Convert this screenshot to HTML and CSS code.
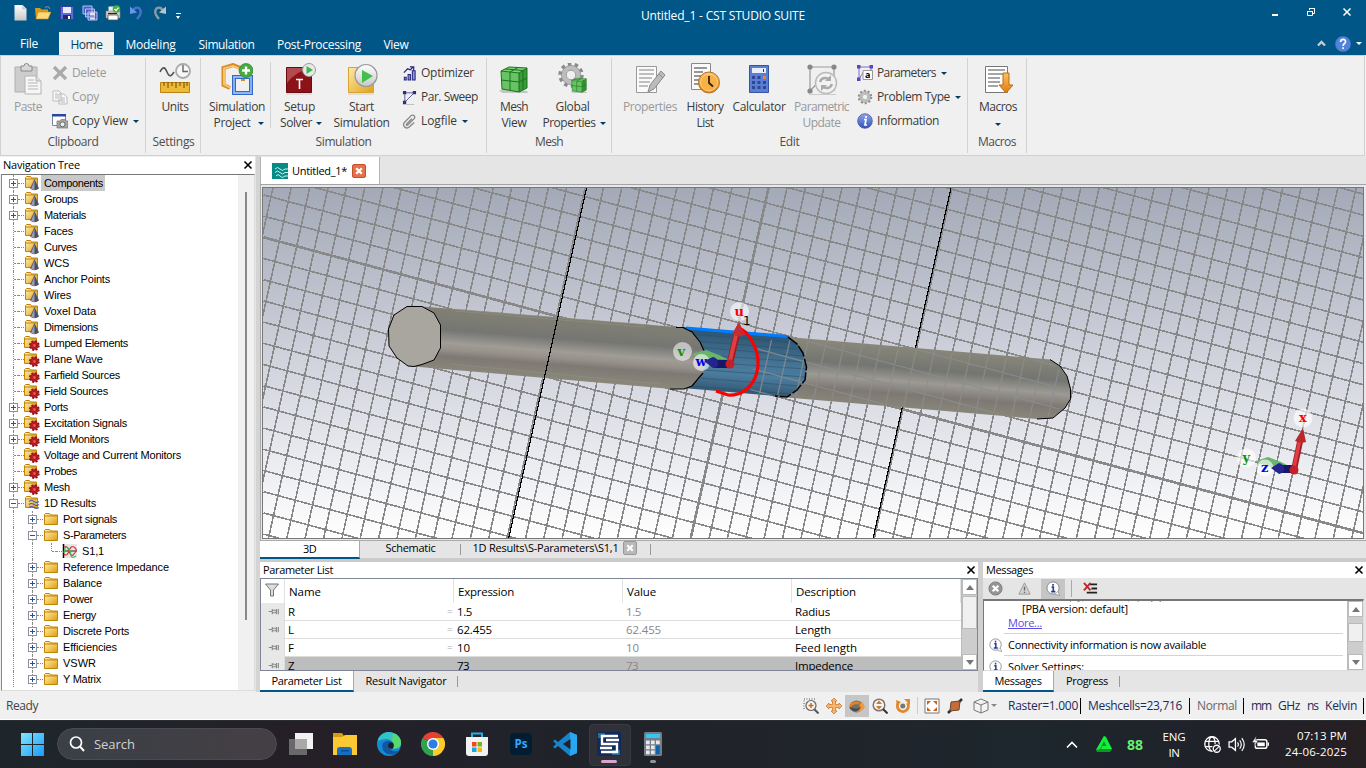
FILE: index.html
```html
<!DOCTYPE html>
<html lang="en">
<head>
<meta charset="utf-8">
<title>Untitled_1 - CST STUDIO SUITE</title>
<link rel="stylesheet" href="styles.css">
</head>
<body>
<svg class="defs" width="0" height="0">
  <defs>
    <linearGradient id="gold" x1="0" y1="0" x2="1" y2="1"><stop offset="0" stop-color="#fce9a8"/><stop offset="1" stop-color="#e0a21a"/></linearGradient>
    <linearGradient id="fold" x1="0" y1="0" x2="1" y2="1"><stop offset="0" stop-color="#fff0bd"/><stop offset=".5" stop-color="#f1cb65"/><stop offset="1" stop-color="#d99b10"/></linearGradient>
    <linearGradient id="orange" x1="0" y1="0" x2="0" y2="1"><stop offset="0" stop-color="#fbc25e"/><stop offset="1" stop-color="#e07c10"/></linearGradient>
    <linearGradient id="silver" x1="0" y1="0" x2="0" y2="1"><stop offset="0" stop-color="#ffffff"/><stop offset="1" stop-color="#c8c8c8"/></linearGradient>
    <linearGradient id="bluei" x1="0" y1="0" x2="0" y2="1"><stop offset="0" stop-color="#8fa8ea"/><stop offset="1" stop-color="#3353b8"/></linearGradient>
    <linearGradient id="win" x1="0" y1="0" x2="1" y2="1"><stop offset="0" stop-color="#7fe6ff"/><stop offset="1" stop-color="#1a9bfc"/></linearGradient>
    <symbol id="page" viewBox="0 0 16 16"><path d="M2.500 0h8l4 4v11.500h-12z" fill="url(#silver)"/><path d="M10.500 0v4h4" fill="#d8d8d8" stroke="#bbb" stroke-width=".6"/></symbol>
    <symbol id="open" viewBox="0 0 16 16"><path d="M0 3h5l1.500 1.500H13V14H1z" fill="#d99a1c"/><path d="M3 7h13l-3 7H1z" fill="#fbd878" stroke="#c98a10" stroke-width=".6"/><path d="M10 3q3-3 5 1" fill="none" stroke="#5c8197" stroke-width="1.300"/></symbol>
    <symbol id="save" viewBox="0 0 16 16"><path d="M1.500 1.500h13v13h-13z" fill="#5d6bd8" stroke="#3740a0"/><path d="M4 2h8v6H4z" fill="#e8eafa"/><path d="M4 10h8v4H4z" fill="#22286e"/><path d="M9 11h2v3H9z" fill="#fff"/></symbol>
    <symbol id="saveall" viewBox="0 0 16 16"><g stroke="#c8d0f5" stroke-width=".9" fill="#4b5dc6"><path d="M1 1h9v8H1zM3.500 4h9v8h-9zM6 7h9v8H6z"/></g><path d="M8 7.500h5v3H8zM8 12.500h5v2H8z" fill="#dfe3fb"/></symbol>
    <symbol id="print" viewBox="0 0 16 16"><path d="M3.500 1.500h8v5h-8z" fill="#eee"/><path d="M1 6h14v7H1z" fill="#d4cfc2" stroke="#888" stroke-width=".6"/><path d="M3 10h10v5H3z" fill="#fff" stroke="#555" stroke-width=".8"/><path d="M3 8.500h9" stroke="#222" stroke-width="1.200"/><circle cx="11.500" cy="4" r="3.800" fill="#46ae43"/><path d="M9.500 4l1.500 1.600L13.500 2.600" fill="none" stroke="#fff" stroke-width="1.300"/></symbol>
    <symbol id="undo" viewBox="0 0 16 16"><path d="M5 5.500Q8 1 11.500 3.500 15 7.500 9 14" fill="none" stroke="#4a70cc" stroke-width="2.400"/><path d="M2 1.500v7.500l7-1.500z" fill="#6c93e6"/></symbol>
    <symbol id="redo" viewBox="0 0 16 16"><path d="M11 5.500Q8 1 4.500 3.500 1 7.500 7 14" fill="none" stroke="#8b9aa3" stroke-width="2.400"/><path d="M14 1.500v7.500l-7-1.500z" fill="#b8c2c8"/></symbol>

    <symbol id="paste" viewBox="0 0 32 32"><path d="M3 4h22v25H3z" fill="#cdcdcd" stroke="#b0b0b0"/><path d="M9 3h3a2.500 2.500 0 0 1 5 0h3v5H9z" fill="#d8d8d8" stroke="#888"/><path d="M13 13h11l5 5v13H13z" fill="#f6f6f6" stroke="#b4b4b4"/><path d="M24 13v5h5" fill="#ddd" stroke="#b4b4b4"/><path d="M16 17h6M16 20h10M16 23h10M16 26h10" stroke="#b5b5b5" stroke-width="1.200"/></symbol>
    <symbol id="delete" viewBox="0 0 16 16"><path d="M2 2l12 12M14 2L2 14" stroke="#aaa" stroke-width="3.200"/></symbol>
    <symbol id="copy" viewBox="0 0 16 16"><path d="M1 2h6l2 2v8H1zM7 5h5l3 3v7H7z" fill="#f8f8f8" stroke="#bbb"/><path d="M3 5h3M3 7h3M3 9h3M9 9h4M9 11h4M9 13h4" stroke="#aaa" stroke-width=".8"/></symbol>
    <symbol id="copyview" viewBox="0 0 16 16"><path d="M.5 1.500h13v11H.5z" fill="#fff" stroke="#7389a6"/><path d="M0 1h14v2.500H0z" fill="#2b479f"/><path d="M5 8h3l1-1.500h4L14 8h2v7H5z" fill="#a5a5a5" stroke="#777" stroke-width=".7"/><circle cx="10.500" cy="11.300" r="2.500" fill="#eee" stroke="#666"/></symbol>
    <symbol id="units" viewBox="0 0 32 32"><path d="M1 9c3-6 5-5 7 0s4 5 7 0" fill="none" stroke="#555" stroke-width="1.600"/><circle cx="24" cy="8" r="7" fill="#f7f7f7" stroke="#aaa" stroke-width="1.800"/><path d="M24 2v6.500h5" fill="none" stroke="#666" stroke-width="1.400"/><path d="M1.500 19.500h29v10h-29z" fill="#edb936" stroke="#bb8312"/><path d="M5 19v4M9 19v6M13 19v4M17 19v6M21 19v4M25 19v6M28 19v4" stroke="#6d4c08"/></symbol>
    <symbol id="simproj" viewBox="0 0 32 32"><path d="M9 25L2.500 22V5L12 2l10 4v12" fill="none" stroke="#d98c22" stroke-width="4"/><path d="M9 24.500L3 21.500V5.500L12 3l9 3.500" fill="none" stroke="#fbc777" stroke-width="1.800"/><path d="M13 14h17v16H13z" fill="none" stroke="#3569c6" stroke-width="4"/><path d="M13 14h17v16H13z" fill="none" stroke="#8fb6f5" stroke-width="1.800"/><circle cx="25" cy="7.500" r="7" fill="#47aa3f" stroke="#38812f" stroke-width=".7"/><path d="M25 3.500v8M21 7.500h8" stroke="#fff" stroke-width="2.400"/></symbol>
    <symbol id="setup" viewBox="0 0 32 32"><path d="M2.500 4.500h25v25h-25z" fill="#8d1218" stroke="#6d0c10"/><path d="M3 5h24Q12 8 3 20z" fill="#b34a4e"/><path d="M12 16.500h7M15.500 16v10" stroke="#fff" stroke-width="1.600"/><circle cx="25" cy="7" r="6.500" fill="#e9e9e9" stroke="#999"/><path d="M22.500 3l6.500 4-6.500 4z" fill="#40b84a"/><path d="M2 31h26" stroke="#ccc"/></symbol>
    <symbol id="start" viewBox="0 0 32 32"><path d="M2.500 4.500h25v25h-25z" fill="url(#gold)" stroke="#d8a52a"/><circle cx="20" cy="12.500" r="11" fill="url(#silver)" stroke="#999" stroke-width="1.200"/><path d="M16 7l11 6-11 7z" fill="#43c04a"/><path d="M2 31h26" stroke="#ccc"/></symbol>
    <symbol id="optim" viewBox="0 0 16 16"><path d="M2.500 12h2v3h-2zM6.500 9h2.500v6H6.500zM11 5h3v10h-3z" fill="#8b98dc" stroke="#28287c" stroke-width="1.100"/><path d="M2 7l4-4 3 1 3-3M8.500 1h4v4" fill="none" stroke="#28287c" stroke-width="1.300"/></symbol>
    <symbol id="sweep" viewBox="0 0 16 16"><path d="M3 3v10L13 3H3" fill="none" stroke="#5a5a9f"/><path d="M1 1h3.500v3.500H1zM11.500 1H15v3.500h-3.500zM1 11.500h3.500V15H1z" fill="#30307a"/><path d="M1 15.500h12" stroke="#bbb"/></symbol>
    <symbol id="clip" viewBox="0 0 16 16"><path d="M10.500 5L5 10.500q-1 1.700.7 1.500L13 5q1.500-2.500-.7-3.500T9 2.500L2.500 9Q.5 12 3 14t5-.3L13 9" fill="none" stroke="#888" stroke-width="1.400"/></symbol>
    <symbol id="mesh" viewBox="0 0 32 32"><path d="M1 28l3-2 25 2 1 2H5z" fill="#c4c4c4"/><path d="M3 8l8-4 18 1-8 5z" fill="#80d276"/><path d="M21 10l8-5v20l-8 4z" fill="#3b9a3a"/><path d="M3 8l18 2v19L4 26z" fill="#67c364"/><path d="M3 8l18 2v19L4 26zM3 8l8-4 18 1v20l-8 4M21 10l8-5M12 9v18M3 17l18 2 8-4M12 9l8-4.500M7 6l18 1.500V27" fill="none" stroke="#18731c"/></symbol>
    <symbol id="gear" viewBox="0 0 32 32"><circle cx="16" cy="16" r="12.500" fill="none" stroke="#8a8a8a" stroke-width="4" stroke-dasharray="4 3.850"/><circle cx="16" cy="16" r="8.500" fill="#eee" stroke="#bdbdbd" stroke-width="5"/><circle cx="16" cy="16" r="11" fill="none" stroke="#888" stroke-width=".8"/><circle cx="16" cy="16" r="5.500" fill="#f0f0f0" stroke="#888"/></symbol>
    <symbol id="globalp" viewBox="0 0 32 32"><use href="#gear" y="-2" width="28" height="28"/><use href="#mesh" x="13" y="13" width="18" height="18"/></symbol>
    <symbol id="props" viewBox="0 0 32 32"><path d="M2.500 3.500h20v26h-20z" fill="#fafafa" stroke="#999"/><path d="M5 7h15M5 11h15M5 15h13M5 19h11M5 23h9" stroke="#aaa" stroke-width="1.400"/><path d="M14 29l2-7L27 8l4 4-11 14z" fill="#bcbcbc" stroke="#888"/><path d="M25 11l4 4" stroke="#888"/></symbol>
    <symbol id="history" viewBox="0 0 32 32"><path d="M2.500 .5h19v26h-19z" fill="#fafafa" stroke="#888"/><path d="M5 5h13M5 9h9M5 13h7M5 17h5M5 21h5" stroke="#777" stroke-width="1.300"/><circle cx="20" cy="19.500" r="10.500" fill="url(#orange)" stroke="#b87024"/><circle cx="20" cy="19.500" r="8.500" fill="#f8b145" stroke="#fbd48c"/><path d="M20 13v7l4 3.500" fill="none" stroke="#352415" stroke-width="1.800"/></symbol>
    <symbol id="calc" viewBox="0 0 32 32"><path d="M6.500 2.500h19v27h-19z" fill="#5b7ed4" stroke="#3455a4"/><path d="M9 5h14v5H9z" fill="#e8effc"/><path d="M20.500 6v3" stroke="#333"/><g fill="#2c4893"><path d="M9 13h3v3H9zM14.500 13h3v3h-3zM9 18h3v3H9zM14.500 18h3v3h-3zM20 18h3v3h-3zM9 23h3v3H9zM14.500 23h3v3h-3zM20 23h3v3h-3z"/></g><path d="M20 13h3v3h-3z" fill="#e8862d"/></symbol>
    <symbol id="paramup" viewBox="0 0 32 32"><path d="M4 28V4h24v24M4 28L18 13" fill="none" stroke="#999" stroke-width="1.200"/><g fill="#888"><circle cx="4" cy="4" r="2.600"/><circle cx="28" cy="4" r="2.600"/><circle cx="4" cy="28" r="2.600"/></g><circle cx="20" cy="20" r="10.500" fill="#f2f2f2" stroke="#bbb" stroke-width="1.500"/><path d="M14 19q2-6 9-3M26 21q-2 6-9 3" fill="none" stroke="#aaa" stroke-width="2.500"/><path d="M25 12v6h-6zM15 28v-6h6z" fill="#aaa"/><path d="M3 31.500h27" stroke="#ccc"/></symbol>
    <symbol id="params" viewBox="0 0 16 16"><path d="M2 14V2h12v4M2 14l5-8" fill="none" stroke="#7a6fd0"/><path d="M0 0h3.500v3.500H0zM12.500 0H16v3.500h-3.500zM0 12.500h3.500V16H0z" fill="#5946bd"/><path d="M6 5.500h9.500v9H6z" fill="#fff" stroke="#999"/><text x="8" y="13" font-size="9" font-weight="700" font-family="Open Sans, sans-serif">a</text></symbol>
    <symbol id="info" viewBox="0 0 16 16"><circle cx="8" cy="8" r="7.300" fill="url(#bluei)" stroke="#32499a" stroke-width=".7"/><path d="M7 6.500h2L8 12h2M9 3v2" fill="none" stroke="#fff" stroke-width="1.700"/></symbol>
    <symbol id="macros" viewBox="0 0 32 32"><path d="M3.500 3.500h22v26h-22z" fill="#fff" stroke="#777"/><path d="M6 7h17M6 11h17M6 15h12M6 19h12M6 23h10" stroke="#888" stroke-width="1.400"/><path d="M21 10h6v12h4l-7 8-7-8h4z" fill="url(#orange)" stroke="#b96b16"/></symbol>
    <symbol id="help" viewBox="0 0 16 16"><circle cx="8" cy="8" r="7.800" fill="#5282da" stroke="#3f66b5" stroke-width=".5"/><path d="M5.500 6q.2-2.700 2.600-2.700T10.500 6Q10.400 7 9 8q-.9.700-.9 2M8.100 11.200v1.800" fill="none" stroke="#fff" stroke-width="1.700"/></symbol>

    <symbol id="folder" viewBox="0 0 16 16"><path d="M1.500 13.500v-10l1-1h4l1 1.500h7v9.500z" fill="url(#fold)" stroke="#c08406"/><path d="M2 5h12.500" stroke="#c08406"/></symbol>
    <symbol id="f-cone" viewBox="0 0 16 16"><path d="M1.500 12.500v-10l1-1h4l1 1.500h6v9.500z" fill="url(#fold)" stroke="#c08406"/><path d="M2 4h11.500" stroke="#c08406"/><path d="M10.500 4l4.500 9.500q-4.500 3.500-9 0z" fill="#4c4e62"/><path d="M10.500 5v10l-3.500-1z" fill="#9a9cb0"/></symbol>
    <symbol id="f-gear" viewBox="0 0 16 16"><path d="M.5 12.500v-10l1-1h4l1 1.500h6v9.500z" fill="url(#fold)" stroke="#c08406"/><path d="M1 4h11.500" stroke="#c08406"/><circle cx="10.300" cy="10.500" r="4.300" fill="#b51c22"/><circle cx="10.300" cy="10.500" r="4.400" fill="none" stroke="#981016" stroke-width="2" stroke-dasharray="2 1.450"/><circle cx="10.300" cy="10.500" r="1.400" fill="#e3584c"/></symbol>
    <symbol id="f-wave" viewBox="0 0 16 16"><path d="M1.500 12.500v-10l1-1h4l1 1.500h6v9.500z" fill="url(#fold)" stroke="#c08406"/><path d="M2 4h11.500" stroke="#c08406"/><path d="M5 6.500q2.500-2 5 0t5 0M5 9.500q2.500-2 5 0t5 0M5 12.500q2.500-2 5 0t5 0" fill="none" stroke="#4f58b0" stroke-width="1.100"/></symbol>
    <symbol id="curve" viewBox="0 0 16 16"><path d="M1 1h14v14H1z" fill="#e6e6e6"/><path d="M1.500 1v14" stroke="#000" stroke-width="1.500"/><path d="M2 8h13" stroke="#222"/><path d="M2 4q3-2 5 4t4 4 3-4-2-4-5 4-5 3" fill="none" stroke="#cd3a3e" stroke-width="1.100"/><path d="M2 10q1-8 4-5t3 7 5 1" fill="none" stroke="#41bf59" stroke-width="1.200"/></symbol>

    <symbol id="funnel" viewBox="0 0 16 16"><path d="M1.500 2h13L9.500 8v6h-3V8z" fill="#ddd" stroke="#777"/></symbol>
    <symbol id="pin" viewBox="0 0 12 8"><path d="M0 4h4M4 1v6M4 2.500h4.500v3H4M9 1v6M11 1v6" fill="none" stroke="#888" stroke-width="1.200"/></symbol>
    <symbol id="bubble" viewBox="0 0 16 16"><circle cx="7.500" cy="7.500" r="6.500" fill="#fff" stroke="#888"/><path d="M9.500 14l5 1.500-1.500-4" fill="#fff" stroke="#888" stroke-width=".8"/><path d="M6 6.500h1.800v5M5.500 11.300h4.500M7.500 3.200v1.800" fill="none" stroke="#22399a" stroke-width="1.700"/></symbol>
    <symbol id="err" viewBox="0 0 16 16"><circle cx="8" cy="8" r="7" fill="#969696" stroke="#7c7c7c"/><path d="M5 5l6 6M11 5l-6 6" stroke="#fff" stroke-width="2.400"/></symbol>
    <symbol id="warn" viewBox="0 0 16 16"><path d="M8 2l6 12H2z" fill="#d2d2d2" stroke="#999"/><path d="M8 6v4M8 11.500v1.300" stroke="#666" stroke-width="1.400"/></symbol>
    <symbol id="clear" viewBox="0 0 16 16"><path d="M7 3.500h8M9 8h6M4 12.500h11" stroke="#222" stroke-width="1.900"/><path d="M1 2l7 8M8 2l-7 8" stroke="#bc2929" stroke-width="2"/></symbol>

    <symbol id="zoomin" viewBox="0 0 16 16"><path d="M1 11V1h11" fill="none" stroke="#555" stroke-dasharray="1 1.500"/><circle cx="8" cy="7.500" r="5" fill="#f5f5f5" stroke="#666" stroke-width="1.200"/><path d="M11.500 11.500l4 4" stroke="#555" stroke-width="2"/><path d="M5.500 7.500h5M8 5v5" stroke="#d16a13" stroke-width="1.500"/></symbol>
    <symbol id="pan" viewBox="0 0 16 16"><path d="M8 0l3 3H9.500v3.500H13V5l3 3-3 3V9.500H9.500V13H11l-3 3-3-3h1.500V9.500H3V11L0 8l3-3v1.500h3.500V3H5z" fill="#f6b76b" stroke="#cb6e20" stroke-width=".7"/></symbol>
    <symbol id="rotate" viewBox="0 0 16 16"><ellipse cx="7.500" cy="8.500" rx="6.500" ry="6" fill="#707070"/><path d="M0 10Q0 3 8 3.500l3 .5-1 2.500Q3 5.500 2 10z" fill="#e28223"/><path d="M1 9q7 4 13-1l1 2q-6 6-14 1z" fill="#4a4a4a"/><path d="M10 8l3-5 3 6q-3 5-9 5 4-2 5-5z" fill="#ef9a3c"/></symbol>
    <symbol id="zoomdyn" viewBox="0 0 16 16"><circle cx="7" cy="7" r="5.800" fill="#f5f5f5" stroke="#777" stroke-width="1.500"/><path d="M11 11l4.500 4.500" stroke="#333" stroke-width="2"/><path d="M7 2.500L10 6H4zM7 11.500L10 8H4z" fill="#d07624"/></symbol>
    <symbol id="spin" viewBox="0 0 16 16"><path d="M3 5.500A5.500 5.500 0 1 0 12.500 5" fill="none" stroke="#e18a2d" stroke-width="3"/><path d="M9 1h6v6z" fill="#e18a2d"/><path d="M1 2l5 2-4 4z" fill="#e18a2d"/><circle cx="7.800" cy="8" r="2.500" fill="#777"/></symbol>
    <symbol id="fit" viewBox="0 0 16 16"><path d="M1 1h14v14H1z" fill="#fff" stroke="#777"/><path d="M3 3h4L3 7zM13 3v4L9 3zM3 13V9l4 4zM13 13H9l4-4z" fill="#c95f17"/></symbol>
    <symbol id="plane" viewBox="0 0 16 16"><path d="M10 6l5-5M1 15l3-3" stroke="#333" stroke-width="2.500"/><path d="M4 4l9-1-1 9-9 1z" fill="#c46c3a" stroke="#6b4630"/></symbol>
    <symbol id="cube" viewBox="0 0 16 16"><path d="M1 4l7-3 7 3v8l-7 3-7-3zM1 4l7 3 7-3M8 7v8" fill="#f3f3f3" stroke="#777"/></symbol>
  </defs>
</svg>

<header class="titlebar">
  <div class="quick">
    <svg><use href="#page"/></svg><svg><use href="#open"/></svg><svg><use href="#save"/></svg><svg><use href="#saveall"/></svg><svg><use href="#print"/></svg><svg><use href="#undo"/></svg><svg><use href="#redo"/></svg>
    <span class="quick-more"></span>
  </div>
  <div class="caption"><span data-w="164">Untitled_1 - CST STUDIO SUITE</span></div>
  <div class="winbtns">
    <svg viewBox="0 0 12 12"><path d="M3 9h6" stroke="#fff" stroke-width="2"/></svg>
    <svg viewBox="0 0 12 12"><path d="M4.500 4V2.500h5v5H8M4 2.500h6M2.500 5.500h5v4h-5zM2 5.500h6" fill="none" stroke="#fff"/></svg>
    <svg viewBox="0 0 12 12"><path d="M2.500 2.500l7 7M9.500 2.500l-7 7" stroke="#fff" stroke-width="1.500"/></svg>
  </div>
</header>
<nav class="tabs">
  <span class="tab file"><b data-w="18">File</b></span>
  <span class="tab active"><b data-w="32">Home</b></span>
  <span class="tab t3"><b data-w="50">Modeling</b></span>
  <span class="tab t4"><b data-w="56">Simulation</b></span>
  <span class="tab t5"><b data-w="84">Post-Processing</b></span>
  <span class="tab t6"><b data-w="25">View</b></span>
  <div class="tabright">
    <svg width="9" height="7" viewBox="0 0 9 7"><path d="M1 5.500L4.500 2 8 5.500" fill="none" stroke="#c9c9c9" stroke-width="2.400"/></svg>
    <svg width="16" height="16"><use href="#help"/></svg>
    <i class="caret white"></i>
  </div>
</nav>

<section class="ribbon">
  <div class="group g1">
    <div class="row">
      <div class="big off" style="width:44px"><svg><use href="#paste"/></svg><p><span data-w="28">Paste</span></p></div>
      <div class="smalls">
        <div class="small off"><svg><use href="#delete"/></svg><span data-w="34">Delete</span></div>
        <div class="small off"><svg><use href="#copy"/></svg><span data-w="27">Copy</span></div>
        <div class="small"><svg><use href="#copyview"/></svg><span data-w="56">Copy View</span><i class="caret"></i></div>
      </div>
    </div>
    <div class="glabel"><span data-w="51">Clipboard</span></div>
  </div>
  <div class="group g2">
    <div class="row"><div class="big" style="width:56px"><svg><use href="#units"/></svg><p><span data-w="27">Units</span></p></div></div>
    <div class="glabel"><span data-w="42">Settings</span></div>
  </div>
  <div class="group g3">
    <div class="row">
      <div class="big" style="width:68px"><svg><use href="#simproj"/></svg><p><span data-w="56">Simulation</span></p><p class="drop proj"><span data-w="37">Project</span><i class="caret"></i></p></div>
      <div class="big lined" style="width:57px"><svg><use href="#setup"/></svg><p><span data-w="31">Setup</span></p><p class="drop"><span data-w="32">Solver</span><i class="caret"></i></p></div>
      <div class="big" style="width:67px"><svg><use href="#start"/></svg><p><span data-w="25">Start</span></p><p><span data-w="56">Simulation</span></p></div>
      <div class="smalls s3">
        <div class="small"><svg><use href="#optim"/></svg><span data-w="53">Optimizer</span></div>
        <div class="small"><svg><use href="#sweep"/></svg><span data-w="57">Par. Sweep</span></div>
        <div class="small"><svg><use href="#clip"/></svg><span data-w="36">Logfile</span><i class="caret"></i></div>
      </div>
    </div>
    <div class="glabel"><span data-w="56">Simulation</span></div>
  </div>
  <div class="group g4">
    <div class="row">
      <div class="big" style="width:52px"><svg><use href="#mesh"/></svg><p><span data-w="28">Mesh</span></p><p><span data-w="25">View</span></p></div>
      <div class="big" style="width:65px"><svg><use href="#globalp"/></svg><p><span data-w="34">Global</span></p><p class="drop"><span data-w="53">Properties</span><i class="caret"></i></p></div>
    </div>
    <div class="glabel"><span data-w="28">Mesh</span></div>
  </div>
  <div class="group g5">
    <div class="row">
      <div class="big off" style="width:60px"><svg><use href="#props"/></svg><p><span data-w="54">Properties</span></p></div>
      <div class="big" style="width:50px"><svg><use href="#history"/></svg><p><span data-w="37">History</span></p><p><span data-w="17">List</span></p></div>
      <div class="big" style="width:58px"><svg><use href="#calc"/></svg><p><span data-w="53">Calculator</span></p></div>
      <div class="big off" style="width:67px"><svg><use href="#paramup"/></svg><p><span data-w="55">Parametric</span></p><p><span data-w="38">Update</span></p></div>
      <div class="smalls">
        <div class="small"><svg><use href="#params"/></svg><span data-w="59">Parameters</span><i class="caret"></i></div>
        <div class="small"><svg><use href="#gear"/></svg><span data-w="73">Problem Type</span><i class="caret"></i></div>
        <div class="small"><svg><use href="#info"/></svg><span data-w="62">Information</span></div>
      </div>
    </div>
    <div class="glabel"><span data-w="20">Edit</span></div>
  </div>
  <div class="group g6">
    <div class="row"><div class="big" style="width:60px"><svg><use href="#macros"/></svg><p><span data-w="38">Macros</span></p><p class="only"><i class="caret"></i></p></div></div>
    <div class="glabel"><span data-w="38">Macros</span></div>
  </div>
</section>

<main class="work">
  <aside class="nav">
    <div class="panelhead"><span data-w="77">Navigation Tree</span><svg class="x" viewBox="0 0 10 10"><path d="M1.500 1.500l7 7M8.500 1.500l-7 7" stroke="#000" stroke-width="1.600"/></svg></div>
    <div class="treebox"><div class="tree" id="tree"></div><div class="treescroll"><i></i></div></div>
  </aside>
  <div class="center">
    <div class="doctabs">
      <div class="doctab">
        <svg width="16" height="16" viewBox="0 0 16 16"><path d="M0 0h16v16H0z" fill="#078b85"/><path d="M3 6q2.500-3 5 0t5 0h3M3 9.500q2.500-3 5 0t5 0h3M4 13q2-3 4 0t5 0h3" fill="none" stroke="#c8f4ef"/></svg>
        <span data-w="55">Untitled_1*</span>
        <svg width="14" height="14" viewBox="0 0 14 14"><rect x=".5" y=".5" width="13" height="13" rx="1.500" fill="#e5714c" stroke="#c6502e"/><path d="M4.200 4.200l5.600 5.600M9.800 4.200L4.200 9.800" stroke="#fff" stroke-width="2.300"/></svg>
      </div>
    </div>
    <div class="viewport">
      <svg id="scene" viewBox="263 188 1100 350" width="1100" height="350">
        <defs>
          <linearGradient id="sky" x1="0" y1="0" x2="0" y2="1"><stop offset="0" stop-color="#a3a9b7"/><stop offset=".5" stop-color="#d1d3dd"/><stop offset="1" stop-color="#ffffff"/></linearGradient>
          <linearGradient id="rod" gradientUnits="userSpaceOnUse" x1="558" y1="313" x2="553" y2="379"><stop offset="0" stop-color="#838072"/><stop offset=".18" stop-color="#7e7d74"/><stop offset=".38" stop-color="#757672"/><stop offset=".58" stop-color="#a09c96"/><stop offset=".68" stop-color="#969089"/><stop offset=".78" stop-color="#7e7974"/><stop offset="1" stop-color="#8a877a"/></linearGradient>
          <linearGradient id="rod2" gradientUnits="userSpaceOnUse" x1="930" y1="348" x2="925" y2="411"><stop offset="0" stop-color="#8a887b"/><stop offset=".35" stop-color="#747671"/><stop offset=".56" stop-color="#9d9a94"/><stop offset=".76" stop-color="#7e7974"/><stop offset="1" stop-color="#8a877a"/></linearGradient>
          <linearGradient id="port" gradientUnits="userSpaceOnUse" x1="745" y1="332" x2="740" y2="394"><stop offset="0" stop-color="#2d536f"/><stop offset=".5" stop-color="#477798"/><stop offset=".7" stop-color="#4b7c9e"/><stop offset="1" stop-color="#325671"/></linearGradient>
          <clipPath id="over"><path d="M757 340L788 340L1050 361L1066 378L1070 390L1066 402L1048 418L787 396L750 393z"/></clipPath>
        </defs>
        <rect x="263" y="188" width="1100" height="351" fill="url(#sky)"/>
        <g id="grid" shape-rendering="crispEdges"></g>
        <path d="M951 188L873 539" stroke="#000" stroke-width="1.200" shape-rendering="crispEdges"/>
        <path d="M788 337L1050 359.500L1060 366L1067 376L1071 389V399L1065 408L1053 418L1037 419L787 397.500z" fill="url(#rod2)"/>
        <path d="M1050 359.500L1060 366L1067 376L1070.500 389V399L1065 408L1053 418L1037 419" fill="none" stroke="#000"/>
        <path d="M683 327L787 335.500L797 343L803 352L806.500 367L805 380L796 390L787 397L683 388z" fill="url(#port)"/>
        <path d="M693 341l104 8M697 347l106 9M703 355l102 7M705 362l101 7M704 370l101 7M699 378l100 8M690 386l100 8M690 334l98 8" stroke="#294e68" stroke-width=".8" opacity=".65"/>
        <g id="overgrid" clip-path="url(#over)"></g>
        <path d="M686 328L787 336.500" stroke="#007dff" stroke-width="3.200"/>
        <path d="M788 337L797 344L803 353L806.500 367L805 380L797 390L787 397L775 396" fill="none" stroke="#000" stroke-width="1.500" stroke-dasharray="12 2"/>
        <path d="M415 306L683 327.500L692 332L700 342L705.500 354V366L701 377L692 386L684 389L672 389L414 366.500z" fill="url(#rod)"/>
        <path d="M455 311l190 16M450 364l210 20M450 309l200 16" stroke="#8f8f84" stroke-width=".7"/>
        <path d="M676 327.500L683 327.500L692 332L700 342L705.500 354M703 373L692 386L684 389L670 389" fill="none" stroke="#000" stroke-width="1.200"/>
        <path d="M407 306.500L422 306.500L434 313L440.500 325V348L434 360L422 364.500L414 366.500L408 366L397 358L389 346L388.500 329L394 315z" fill="#a8a69f" stroke="#000"/>
        <path d="M586.500 188L508.500 539" stroke="#000" stroke-width="1.200" shape-rendering="crispEdges"/>
        <path d="M738 328Q746 329 753 343Q762 360 755 378Q746 396 728 395L716 391" fill="none" stroke="#f00" stroke-width="3.200"/>
        <g class="axis">
          <circle cx="739.500" cy="311.500" r="9.500" fill="#fff" opacity=".6"/><circle cx="682.500" cy="351.500" r="9.500" fill="#fff" opacity=".55"/>
          <path d="M692 354l14-4 13 5 10 5-14-1-14 1z" fill="#69b56c"/>
          <circle cx="701.500" cy="362.500" r="8.500" fill="#fff" opacity=".6"/>
          <path d="M714 360h14v8h-14z" fill="#171769"/><path d="M704 361l9-4q5 1 5 6t-5 5z" fill="#24248f"/>
          <path d="M730 363L737 333" stroke="#952127" stroke-width="6.500"/><path d="M729.500 363L736.500 333" stroke="#e33c42" stroke-width="4"/><path d="M739 322l6 13q-6 3-13-1z" fill="#c42d32"/><circle cx="730" cy="364" r="4.500" fill="#c32127"/>
          <text x="734.500" y="316" fill="#f00">u</text><text x="677.500" y="356" fill="#0b930b">v</text><text x="695.500" y="366" fill="#0000f0">w</text><text x="743" y="325" class="one">1</text>
        </g>
        <g class="axis">
          <circle cx="1303" cy="418" r="9.500" fill="#fff" opacity=".65"/><circle cx="1246.500" cy="458" r="9.500" fill="#fff" opacity=".65"/>
          <path d="M1256 461l12-4 13 5 12 6-14-1-12-1z" fill="#69b56c"/><circle cx="1265" cy="468" r="8.500" fill="#fff" opacity=".65"/>
          <path d="M1278 465h15v8h-15z" fill="#171769"/><path d="M1271 468l8-5q5 1 5 5.500t-5 5.500z" fill="#24248f"/>
          <path d="M1294 470L1301 437" stroke="#952127" stroke-width="6"/><path d="M1293.500 470L1300.500 437" stroke="#e33c42" stroke-width="3.500"/><path d="M1303 428l3 14q-5 2-11-1z" fill="#b8292e"/><circle cx="1294" cy="470" r="4.500" fill="#c32127"/>
          <text x="1299" y="422" fill="#f00">x</text><text x="1242.500" y="462" fill="#0b930b">y</text><text x="1261" y="472" fill="#0000f0">z</text>
        </g>
      </svg>
    </div>
    <div class="viewtabs">
      <span class="vt on" style="width:100px"><b data-w="13">3D</b></span>
      <span class="vt sep" style="width:101px"><b data-w="50">Schematic</b></span>
      <span class="vt sep wide"><b data-w="146">1D Results\S-Parameters\S1,1</b><svg width="14" height="14" viewBox="0 0 14 14"><rect x=".5" y=".5" width="13" height="13" rx="1.500" fill="#b9b9b9" stroke="#999"/><path d="M4.200 4.200l5.600 5.600M9.800 4.200L4.200 9.800" stroke="#fff" stroke-width="2"/></svg></span>
    </div>
    <div class="lower">
      <section class="params">
        <div class="panelhead"><span data-w="70">Parameter List</span><svg class="x" viewBox="0 0 10 10"><path d="M1.500 1.500l7 7M8.500 1.500l-7 7" stroke="#000" stroke-width="1.600"/></svg></div>
        <div class="tablebox">
          <div class="table">
            <div class="thead"><div><svg width="16" height="16"><use href="#funnel"/></svg></div><div><span data-w="32">Name</span></div><div><span data-w="56">Expression</span></div><div><span data-w="29">Value</span></div><div><span data-w="60">Description</span></div></div>
            <div class="tr"><div><svg><use href="#pin"/></svg></div><div><span>R</span></div><div><em>=</em><span data-w="15">1.5</span></div><div><span data-w="15">1.5</span></div><div><span data-w="35">Radius</span></div></div>
            <div class="tr"><div><svg><use href="#pin"/></svg></div><div><span>L</span></div><div><em>=</em><span data-w="35">62.455</span></div><div><span data-w="35">62.455</span></div><div><span data-w="36">Length</span></div></div>
            <div class="tr"><div><svg><use href="#pin"/></svg></div><div><span>F</span></div><div><em>=</em><span data-w="13">10</span></div><div><span data-w="13">10</span></div><div><span data-w="62">Feed length</span></div></div>
            <div class="tr sel"><div><svg><use href="#pin"/></svg></div><div><span>Z</span></div><div><span data-w="12">73</span></div><div><span data-w="12">73</span></div><div><span data-w="58">Impedence</span></div></div>
          </div>
          <div class="scroll"><i class="up"></i><i class="thumb"></i><i class="down"></i></div>
        </div>
        <div class="bottabs"><span class="vt on" style="width:94px"><b data-w="70">Parameter List</b></span><span class="vt sep" style="width:104px"><b data-w="81">Result Navigator</b></span></div>
      </section>
      <section class="msgs">
        <div class="panelhead"><span data-w="47">Messages</span><svg class="x" viewBox="0 0 10 10"><path d="M1.500 1.500l7 7M8.500 1.500l-7 7" stroke="#000" stroke-width="1.600"/></svg></div>
        <div class="msgtools"><span><svg><use href="#err"/></svg></span><span><svg><use href="#warn"/></svg></span><span class="on"><svg><use href="#bubble"/></svg></span><u></u><span class="clr"><svg><use href="#clear"/></svg></span></div>
        <div class="msgbox">
          <div class="msglist">
            <svg class="clipped" width="190" height="2" viewBox="0 0 190 2"><path d="M1 0h2v1H1zM16 0h4v1h-4zM26 0h1v1h-1zM118 0h1v1h-1zM136 0h2v1h-2zM163 0h3v1h-3zM180 0h3v1h-3z" fill="#333"/></svg>
            <div class="m1"><span data-w="106">[PBA version: default]</span></div>
            <div class="m2"><a data-w="34">More...</a></div>
            <div class="m3"><svg><use href="#bubble"/></svg><span data-w="198">Connectivity information is now available</span></div>
            <div class="m3"><svg><use href="#bubble"/></svg><span data-w="76">Solver Settings:</span></div>
          </div>
          <div class="scroll small-s"><i class="up"></i><i class="thumb"></i><i class="down"></i></div>
        </div>
        <div class="bottabs"><span class="vt on" style="width:71px"><b data-w="47">Messages</b></span><span class="vt sep" style="width:66px"><b data-w="42">Progress</b></span></div>
      </section>
    </div>
  </div>
</main>

<footer class="status">
  <span class="ready" data-w="32">Ready</span>
  <div class="stools"><span><svg><use href="#zoomin"/></svg></span><span><svg><use href="#pan"/></svg></span><span class="on"><svg><use href="#rotate"/></svg></span><span><svg><use href="#zoomdyn"/></svg></span><span><svg><use href="#spin"/></svg></span><u></u><span><svg><use href="#fit"/></svg></span><span><svg><use href="#plane"/></svg></span><span class="cubeb"><svg><use href="#cube"/></svg><i class="caret gray"></i></span></div>
  <div class="sf f1"><span data-w="70">Raster=1.000</span></div>
  <div class="sf f2"><span data-w="94">Meshcells=23,716</span></div>
  <div class="sf f3"><span data-w="40">Normal</span></div>
  <div class="sf f4"><span data-w="20">mm</span><span data-w="22">GHz</span><span data-w="11">ns</span><span data-w="32">Kelvin</span></div>
</footer>

<div class="taskbar">
  <svg class="winlogo" viewBox="0 0 23 23"><path d="M0 0h11v11H0zM12 0h11v11H12zM0 12h11v11H0zM12 12h11v11H12z" fill="url(#win)"/></svg>
  <div class="search"><svg width="18" height="18" viewBox="0 0 18 18"><circle cx="8" cy="7.500" r="5.500" fill="none" stroke="#fff" stroke-width="1.700"/><path d="M12 11.500l4 4.500" stroke="#fff" stroke-width="1.900"/></svg><span data-w="41">Search</span></div>
  <div class="apps">
    <span><svg viewBox="0 0 24 24"><path d="M6 1h18v16H6z" fill="#f2f2f2"/><path d="M0 7h18v16H0z" fill="#777" opacity=".85"/><path d="M6 7h12v10H6z" fill="#a9a9a9"/></svg></span>
    <span><svg viewBox="0 0 24 24"><path d="M0 1h9l2 3v4H0z" fill="#d69a13"/><path d="M0 5h9l3-2h12v20H0z" fill="#fcc934"/><path d="M4 23v-5q0-3 3-3h9q3 0 3 3v5z" fill="#1470c1"/><path d="M8 18h8v1.500H8z" fill="#0c4e90"/></svg></span>
    <span><svg viewBox="0 0 24 24"><circle cx="12" cy="12" r="12" fill="#1689d6"/><path d="M1 7Q6-2 15 .5 24 3 24 11q0 6-8 5.500 3-5-2-8T1 9z" fill="#34c4c8"/><path d="M16 1q8 3 8 10 0 6-8 5.500 2-4-1-7z" fill="#59d96d"/><path d="M10 9Q3 10 6 18q4 6 12 4 3-1 5-4-6 3-10-1-3-4 1-7-2-2-4-1z" fill="#10579f"/><path d="M12 11q-3 5 3 6l1-1q2-3-1-6z" fill="#1d2127"/></svg></span>
    <span><svg viewBox="0 0 24 24"><path d="M12 12L1.600 6A12 12 0 0 1 22.400 6z" fill="#e34133"/><path d="M12 12L1.600 6A12 12 0 0 0 12 24z" fill="#31a350"/><path d="M12 12L12 24A12 12 0 0 0 22.400 6H12z" fill="#fbcb2d"/><circle cx="12" cy="12" r="6" fill="#fff"/><circle cx="12" cy="12" r="4.600" fill="#2e7bea"/></svg></span>
    <span><svg viewBox="0 0 24 24"><path d="M7 6V1.500h10V6" fill="none" stroke="#22aee8" stroke-width="2"/><path d="M1 5h22v16q0 3-3 3H4q-3 0-3-3z" fill="#f2f2f2"/><path d="M7 10h4.500v4.500H7z" fill="#ef4823"/><path d="M12.500 10H17v4.500h-4.500z" fill="#7bb317"/><path d="M7 15.500h4.500V20H7z" fill="#1aa5e6"/><path d="M12.500 15.500H17V20h-4.500z" fill="#fbb40a"/></svg></span>
    <span><svg viewBox="0 0 24 24"><rect x="1" y="1" width="22" height="22" rx="4" fill="#001d34"/><text x="5.500" y="15.500" font-size="11.500" font-weight="700" fill="#32a7fb" textLength="13" lengthAdjust="spacingAndGlyphs" font-family="Open Sans, sans-serif">Ps</text></svg></span>
    <span><svg viewBox="0 0 24 24"><path d="M17 0l7 3v18l-7 3L5 14l-3 2.500L0 15l3-3-3-3 2-1.500L5 10z" fill="#1785cd"/><path d="M17 0l7 3v18l-7 3z" fill="#29a8f1"/><path d="M17.500 7L10 12l7.500 5.500z" fill="#20242a"/></svg></span>
    <span class="on"><svg viewBox="0 0 24 24"><path d="M0 0h24v24H0z" fill="#102a5c"/><path d="M1 1h7v5H1zM15 18h8v5h-8z" fill="#276d96"/><path d="M21 4H5v8h15v8H4M9 8h13M3 16h12" fill="none" stroke="#fff" stroke-width="2.400"/></svg></span>
    <span class="dot"><svg viewBox="0 0 24 24"><rect x="3" y="0" width="18" height="24" rx="1.500" fill="#747c86"/><path d="M5 2h14v4H5z" fill="#35c7ef"/><g fill="#e6e8ea"><path d="M5 8.500h3.700v3.700H5zM10 8.500h3.700v3.700H10zM15 8.500h3.700v3.700H15zM5 13.500h3.700v3.700H5zM10 13.500h3.700v3.700H10zM5 18.500h3.700v3.700H5zM10 18.500h3.700v3.700H10z"/></g><path d="M15 13.500h3.700v8.700H15z" fill="#0d62ae"/></svg></span>
  </div>
  <div class="tray">
    <svg class="chev" viewBox="0 0 12 8"><path d="M1 6.500L6 1.500l5 5" fill="none" stroke="#fff" stroke-width="1.600"/></svg>
    <svg class="tri" viewBox="0 0 16 16"><path d="M8 0l8 13-2 3H1l-1-2z" fill="#0b962a"/><path d="M8 0l2 1 6 12H5l1.500-3h4L8 5l-4 8-4 1z" fill="#14f03a"/></svg>
    <b class="temp" data-w="16">88</b>
    <div class="lang"><span data-w="23">ENG</span><span data-w="11">IN</span></div>
    <svg class="net" viewBox="0 0 16 16"><g fill="none" stroke="#fff" stroke-width="1.200"><circle cx="7.500" cy="7.500" r="6.800"/><ellipse cx="7.500" cy="7.500" rx="3" ry="6.800"/><path d="M1 5h13M1 10h13"/></g><circle cx="12" cy="12" r="4.600" fill="#22232a"/><circle cx="12" cy="12" r="3.300" fill="none" stroke="#fff" stroke-width="1.200"/><path d="M9.700 14.300l4.600-4.600" stroke="#fff"/></svg>
    <svg class="vol" viewBox="0 0 16 16"><path d="M1 5.500h2.500L7 2.500v11l-3.500-3H1z" fill="none" stroke="#fff" stroke-width="1.200"/><path d="M9 6q1.500 2 0 4M11 4q3 4 0 8M13 2q4.500 6 0 12" fill="none" stroke="#fff" stroke-width="1.100"/></svg>
    <svg class="bat" viewBox="0 0 16 16"><rect x="3" y="4.500" width="11" height="8" rx="2" fill="none" stroke="#fff" stroke-width="1.400"/><path d="M5 7h7v3.500H5z" fill="#fff"/><path d="M15.400 7v3" stroke="#fff" stroke-width="1.300"/><path d="M4 1L0 7h3l-1 4 4-6H3.500z" fill="#fff" stroke="#22232a" stroke-width=".5"/></svg>
    <div class="clock"><span data-w="50">07:13 PM</span><span data-w="62">24-06-2025</span></div>
  </div>
</div>
<script src="app.js"></script>
</body>
</html>
```

FILE: styles.css
```css
* { box-sizing: border-box; }
body { margin: 0; width: 1366px; height: 768px; overflow: hidden; background: #f0f0f0; font-family: "Open Sans", "Noto Sans", sans-serif; font-size: 12px; line-height: 16px; color: #333; }
svg { display: block; flex: none; }
.defs { position: absolute; }
b { font-weight: 400; }
p { margin: 0; }
span, b, a { white-space: nowrap; }
.caret { display: inline-block; flex: none; width: 0; height: 0; border: 3px solid transparent; border-top-color: #003c63; border-bottom: 0; }
.caret.white { border-top-color: #fff; }
.caret.gray { border-top-color: #888; }

.titlebar { display: flex; height: 32px; background: #005687; color: #fff; }
.quick { display: flex; width: 320px; padding: 5px 0 0 12px; gap: 7.300px; }
.quick svg { width: 16px; height: 16px; }
.quick-more { width: 5px; height: 6px; margin: 8px 0 0 1px; border-top: 1px solid #fff; position: relative; }
.quick-more::after { content: ""; position: absolute; top: 2px; left: 0; border: 2.500px solid transparent; border-top: 3px solid #fff; border-bottom: 0; }
.caption { width: 806px; text-align: center; padding-top: 8px; }
.winbtns { display: flex; margin-left: auto; padding: 6px 13px 0 0; gap: 24px; }
.winbtns svg { width: 12px; height: 12px; }
.tabs { display: flex; height: 23px; background: #005687; color: #fff; }
.tab { display: block; padding-top: 5px; text-align: center; }
.file { width: 58px; padding-top: 4px; }
.tab.active { width: 55px; margin-left: 1px; background: #f0f0f0; color: #003f66; }
.t3 { width: 73px; } .t4 { width: 79px; } .t5 { width: 106px; } .t6 { width: 48px; }
.tabright { display: flex; align-items: center; margin-left: auto; gap: 9px; padding-right: 4px; }
.tabright .caret { margin-left: -4px; }

.ribbon { display: flex; height: 101px; border: 1px solid #d1d1d1; background: #f0f0f0; padding-top: 2px; color: #3b3b3b; width: 1365px; }
.group { display: flex; flex-direction: column; height: 95px; border-right: 1px solid #d2d2d2; }
.g1 { width: 145px; } .g2 { width: 55px; } .g3 { width: 286px; } .g4 { width: 125px; } .g5 { width: 356px; } .g6 { width: 59px; }
.row { display: flex; height: 76px; }
.g1 .row { padding-left: 5px; } .g3 .row { padding-left: 2px; } .g4 .row { padding-left: 1px; } .g5 .row { padding-left: 8px; }
.big { display: flex; flex-direction: column; align-items: center; padding-top: 5px; flex: none; }
.big svg { width: 32px; height: 32px; margin-bottom: 4px; }
.big p { height: 16px; }
.g2 .big, .g2 .glabel { margin-left: 1px; }
.lined { position: relative; }
.lined::before { content: ""; position: absolute; left: -1px; top: 4px; height: 66px; width: 1px; background: #d2d2d2; }
.drop { display: flex; align-items: center; gap: 4px; margin-left: 3px; }
.proj { gap: 7px; }
.only { padding-top: 0; margin-top: -1px; }
.off { color: #999; }
.smalls { padding: 3px 0 0 2px; }
.s3 { padding-left: 7px; }
.small { display: flex; align-items: center; height: 24px; }
.small svg { width: 16px; height: 16px; margin-right: 4px; }
.s3 .small svg { width: 15px; height: 15px; }
.small .caret { margin-left: 5px; }
.glabel { text-align: center; color: #4d4d4d; }

.work { display: flex; height: 536px; background: #d4d4d4; color: #000; font-size: 11px; }
.panelhead { display: flex; align-items: center; justify-content: space-between; height: 16px; padding: 0 2px 0 3px; background: #fff; }
.x { width: 10px; height: 10px; }
.nav { width: 256px; padding-top: 1px; background: #f0f0f0; border-right: 1px solid #e4e4e4; margin-right: 4px; }
.nav .panelhead { height: 17px; padding-right: 2px; padding-bottom: 2px; }
.treebox { display: flex; width: 254px; height: 517px; margin-left: 1px; border: 1px solid #777; border-color: #777 #ddd #ddd #888; background: #fff; overflow: hidden; }
.tree { width: 236px; font: 11px/16px "Liberation Sans", Arial, sans-serif; position: relative; }
.treescroll { width: 16px; background: #f0f0f0; padding: 17px 0 0 7px; }
.treescroll i { display: block; width: 2px; height: 428px; background: #888; }
.trow { display: flex; align-items: center; height: 16px; position: relative; }
.trow > svg { width: 16px; height: 16px; margin-right: 2px; }
.trow .lbl { padding: 0 2px; }
.trow.sel .lbl { background: #c9c9c9; line-height: 16px; margin-left: -1px; padding: 0 2px 0 3px; }
.guide { position: absolute; top: 0; height: 16px; border-left: 1px dotted #888; }
.guide.half { height: 8px; }
.dash { width: 6px; border-top: 1px dotted #888; }
.twist { width: 9px; height: 9px; border: 1px solid #8a919e; background: #fff; position: relative; z-index: 1; }
.twist::before { content: ""; position: absolute; left: 1px; top: 3px; width: 5px; height: 1px; background: #2d4f9e; }
.twist.plus::after { content: ""; position: absolute; left: 3px; top: 1px; width: 1px; height: 5px; background: #2d4f9e; }
.twist.none { border: 0; background: none; }
.twist.none::before { left: 5px; top: 4px; width: 4px; background: none; border-top: 1px dotted #888; }

.center { width: 1106px; background: #e5e5e5; }
.doctabs { height: 29px; padding: 1px 0 0; border-bottom: 1px solid #a4a4a4; }
.doctab { display: flex; align-items: center; width: 120px; height: 27px; padding-left: 11px; background: #fff; border: solid #b5b5b5; border-width: 0 1px 0 1px; }
.doctab span { margin: 0 5px 0 4px; }
.viewport { height: 355px; padding: 3px 0 0 2px; border-left: 1px solid #aaa; background: #e8e8e8; }
.viewport svg { outline: 1px solid #777; width: 1100px; height: 350px; }
.axis text { font: bold 13px "DejaVu Serif", "Liberation Serif", serif; }
.axis text.one { font: 12px "DejaVu Sans", sans-serif; }
.viewtabs { display: flex; height: 18px; border-top: 1px solid #aaa; }
.vt { display: flex; align-items: center; justify-content: center; position: relative; height: 17px; }
.vt.on { background: #fff; border-bottom: 2px solid #005687; border-right: 1px solid #aaa; height: 18px; }
.vt.sep::after { content: ""; position: absolute; right: 0; top: 3px; width: 1px; height: 11px; background: #999; }
.vt.wide { width: 190px; gap: 4px; padding-right: 3px; }
.viewtabs .sep { height: 14px; }
.lower { display: flex; height: 134px; border-top: 4px solid #cbcbcb; background: #d0d0d0; gap: 5px; }
.params { width: 718px; background: #e5e5e5; }
.tablebox { display: flex; height: 93px; border: 1px solid #7f8596; background: #fff; }
.table { width: 700px; overflow: hidden; font-size: 11.500px; }
.thead, .tr { display: grid; grid-template-columns: 24px 169px 169px 169px 169px; }
.thead { height: 24px; }
.thead > div { border-right: 1px solid #e2e2e2; padding: 5px 0 0 4px; }
.thead > div:first-child { padding: 3px 0 0 3px; }
.tr { height: 18px; }
.tr > div { position: relative; border-bottom: 1px solid #ddd; padding: 0 0 0 3px; line-height: 17px; }
.tr > div:first-child { background: #e8e8e8; border-right: 1px solid #ddd; border-bottom: 0; padding: 5px 0 0 7px; }
.tr svg { width: 12px; height: 7px; }
.tr em { position: absolute; left: -7px; font-style: normal; color: #aaa; font-size: 10px; }
.tr > div:nth-child(4) { color: #888; }
.tr.sel > div:not(:first-child) { background: #bdbdbd; }
.scroll { width: 16px; background: #cdcdcd; display: flex; flex-direction: column; border-left: 1px solid #bbb; }
.scroll i { display: block; border: 1px solid #bbb; background: #fff; flex: none; height: 16px; position: relative; }
.scroll .up::after, .scroll .down::after { content: ""; position: absolute; left: 3px; top: 5px; border: 4px solid transparent; border-bottom: 5px solid #777; border-top: 0; }
.scroll .down::after { border-bottom: 0; border-top: 5px solid #777; }
.scroll .thumb { height: 33px; background: #f0f0f0; margin-top: 1px; }
.scroll .down { margin-top: auto; }
.bottabs { display: flex; height: 21px; background: #e5e5e5; }
.bottabs .vt.on { height: 21px; border-bottom-width: 2px; }
.bottabs .vt.sep { height: 19px; }
.bottabs .vt.sep::after { top: 5px; }
.msgs { width: 383px; background: #e5e5e5; }
.msgtools { display: flex; height: 21px; align-items: center; }
.msgtools span { display: flex; justify-content: center; width: 24px; margin-right: 5px; }
.msgtools svg { width: 15px; height: 15px; }
.msgtools span.on { background: #c5c5c5; height: 20px; align-items: center; margin-right: 6px; }
.msgtools u { width: 1px; height: 17px; background: #aaa; margin-right: 6px; }
.msgbox { display: flex; height: 72px; width: 381px; border: 1px solid #777; border-right-color: #ddd; border-bottom-color: #ddd; border-top-width: 2px; background: #fff; }
.msglist { width: 363px; overflow: hidden; padding-right: 4px; }
.clipped { margin-left: 38px; height: 1px; }
.m1 { height: 14px; padding-left: 38px; line-height: 14px; }
.m2 { height: 18px; margin: 0 0 0 20px; padding: 0 0 0 4px; border-bottom: 1px solid #d4d4d4; line-height: 14px; }
.m2 a { color: #5a4be5; text-decoration: underline; }
.m3 { display: flex; align-items: center; height: 22px; padding-left: 5px; position: relative; }
.m3 svg { width: 14px; height: 14px; margin-right: 5px; }
.m3::after { content: ""; position: absolute; left: 20px; right: 0; bottom: 0; height: 1px; background: #d4d4d4; }
.small-s .thumb { height: 19px; margin-top: 6px; }

.status { display: flex; align-items: center; height: 28px; border-bottom: 1px solid #fff; color: #1b2b5c; }
.ready { margin-left: 6px; color: #444; }
.stools { display: flex; align-items: center; margin-left: 761px; width: 203px; }
.stools span { display: flex; flex: none; justify-content: center; align-items: center; width: 23.200px; height: 22px; }
.stools svg { width: 16px; height: 16px; }
.stools .on { background: #c6c6c6; }
.stools u { width: 1px; height: 17px; background: #ccc; margin: 0 2px; }
.stools .cubeb { width: 32px; gap: 2px; margin-left: 3px; }
.sf { display: flex; flex: none; height: 16px; line-height: 16px; border-right: 1px solid #000; }
.f1 { width: 77px; padding-left: 4px; margin-left: 2px; } .f2 { width: 109px; padding-left: 7px; } .f3 { width: 54px; padding-left: 7px; color: #666; } .f4 { width: 120px; padding-left: 7px; gap: 7px; }

.taskbar { display: flex; height: 48px; background: linear-gradient(90deg, #1d262c, #251f27 22%, #21222a 35%, #20242b 60%, #1d272d 75%, #20222a 88%, #261f22); color: #fff; border-top: 1px solid #2a2d31; }
.winlogo { width: 23px; height: 23px; margin: 12px 13px 0 21px; }
.search { display: flex; align-items: center; width: 220px; height: 32px; margin-top: 7px; padding-left: 10px; gap: 8px; border-radius: 16px; background: linear-gradient(90deg, #3a4046, #453f44); border: 1px solid #4b4c51; color: #d2d2d2; font-size: 13px; }
.apps { display: flex; margin-left: 2px; }
.apps > span { display: flex; width: 44px; justify-content: center; padding-top: 11px; position: relative; }
.apps svg { width: 24px; height: 24px; }
.apps .on::before { content: ""; position: absolute; left: 2px; top: 3px; width: 40px; height: 40px; border-radius: 4px; background: #303138; border: 1px solid #3a3b41; }
.apps .on svg { position: relative; }
.apps .on::after { content: ""; position: absolute; left: 14px; top: 39px; width: 16px; height: 3px; border-radius: 2px; background: #d8a4cf; }
.apps .dot::after { content: ""; position: absolute; left: 19px; top: 39px; width: 6px; height: 3px; border-radius: 2px; background: #909398; }
.tray { display: flex; margin-left: auto; width: 300px; }
.chev { width: 12px; height: 8px; margin: 20px 0 0 0; }
.tri { width: 16px; height: 16px; margin: 15px 0 0 18px; }
.temp { font: 700 14px/16px "Open Sans", sans-serif; color: #67f06d; margin: 16px 0 0 15px; }
.lang { margin: 8px 0 0 19px; display: flex; flex-direction: column; align-items: center; width: 24px; font-size: 11.500px; }
.net { width: 17px; height: 17px; margin: 15px 0 0 18px; }
.vol { width: 17px; height: 17px; margin: 15px 0 0 7px; }
.bat { width: 17px; height: 17px; margin: 14px 0 0 7px; }
.clock { margin: 7px 0 0 auto; padding-right: 19px; display: flex; flex-direction: column; align-items: flex-end; font-size: 11.500px; }
```

FILE: app.js
```js
// Navigation tree: [level, icon, label, expander, label width]
const rows = [
  [0, 'f-cone', 'Components', '+', 59], [0, 'f-cone', 'Groups', '+', 34], [0, 'f-cone', 'Materials', '+', 42],
  [0, 'f-cone', 'Faces', '', 29], [0, 'f-cone', 'Curves', '', 33], [0, 'f-cone', 'WCS', '', 25],
  [0, 'f-cone', 'Anchor Points', '', 66], [0, 'f-cone', 'Wires', '', 27], [0, 'f-cone', 'Voxel Data', '', 52],
  [0, 'f-cone', 'Dimensions', '', 54], [0, 'f-gear', 'Lumped Elements', '', 84], [0, 'f-gear', 'Plane Wave', '', 59],
  [0, 'f-gear', 'Farfield Sources', '', 76], [0, 'f-gear', 'Field Sources', '', 64], [0, 'f-gear', 'Ports', '+', 24],
  [0, 'f-gear', 'Excitation Signals', '+', 83], [0, 'f-gear', 'Field Monitors', '+', 65],
  [0, 'f-gear', 'Voltage and Current Monitors', '', 137], [0, 'f-gear', 'Probes', '', 33], [0, 'f-gear', 'Mesh', '+', 26],
  [0, 'f-wave', '1D Results', '-', 52], [1, 'folder', 'Port signals', '+', 54], [1, 'folder', 'S-Parameters', '-', 63],
  [2, 'curve', 'S1,1', '', 22], [1, 'folder', 'Reference Impedance', '+', 106], [1, 'folder', 'Balance', '+', 39],
  [1, 'folder', 'Power', '+', 30], [1, 'folder', 'Energy', '+', 33], [1, 'folder', 'Discrete Ports', '+', 66],
  [1, 'folder', 'Efficiencies', '+', 54], [1, 'folder', 'VSWR', '+', 33], [1, 'folder', 'Y Matrix', '+', 38]
];
document.getElementById('tree').innerHTML = rows.map(([lv, icon, label, ex, w], i) => {
  let guides = '<i class="guide" style="left:11px"></i>';
  if (lv) guides += '<i class="guide" style="left:30px"></i>';
  if (lv === 2) guides += '<i class="guide half" style="left:49px"></i>';
  const cls = ex === '+' ? 'twist plus' : ex === '-' ? 'twist' : 'twist none';
  return `<div class="trow${i ? '' : ' sel'}" style="padding-left:${7 + lv * 19}px">${guides}<i class="${cls}"></i><i class="dash"></i>` +
    `<svg><use href="#${icon}"/></svg><span class="lbl"><span data-w="${w}">${label}</span></span></div>`;
}).join('');

// Working plane: two families of parallel lines
let d = '', heavy = '';
for (let k = -34; k <= 40; k++) {
  const x = 768.6 + 18.36 * k;
  const seg = `M${x.toFixed(1)} 188L${(x - 78).toFixed(1)} 539`;
  if (k === 0) heavy += seg; else d += seg;
}
for (let k = -18; k <= 16; k++) {
  const y = 237.3 + 21.2 * k;
  const seg = `M263.500 ${y.toFixed(1)}L1363 ${(y + 295.8).toFixed(1)}`;
  if (k === 0) heavy += seg; else d += seg;
}
document.getElementById('grid').innerHTML =
  `<path d="${d}" stroke="#888" stroke-width="1.6"/><path d="${heavy}" stroke="#888" stroke-width="2.6"/>`;
document.getElementById('overgrid').innerHTML =
  `<path d="${d}${heavy}" stroke="#8b8e8f" stroke-width="1.3" opacity=".8"/>`;

// Track each label so that it fills its nominal width
document.querySelectorAll('[data-w]').forEach(el => {
  el.style.letterSpacing = '0';
  const r = document.createRange();
  r.selectNodeContents(el);
  const n = el.textContent.length;
  el.style.letterSpacing = ((+el.dataset.w - r.getBoundingClientRect().width) / n).toFixed(3) + 'px';
});
```
